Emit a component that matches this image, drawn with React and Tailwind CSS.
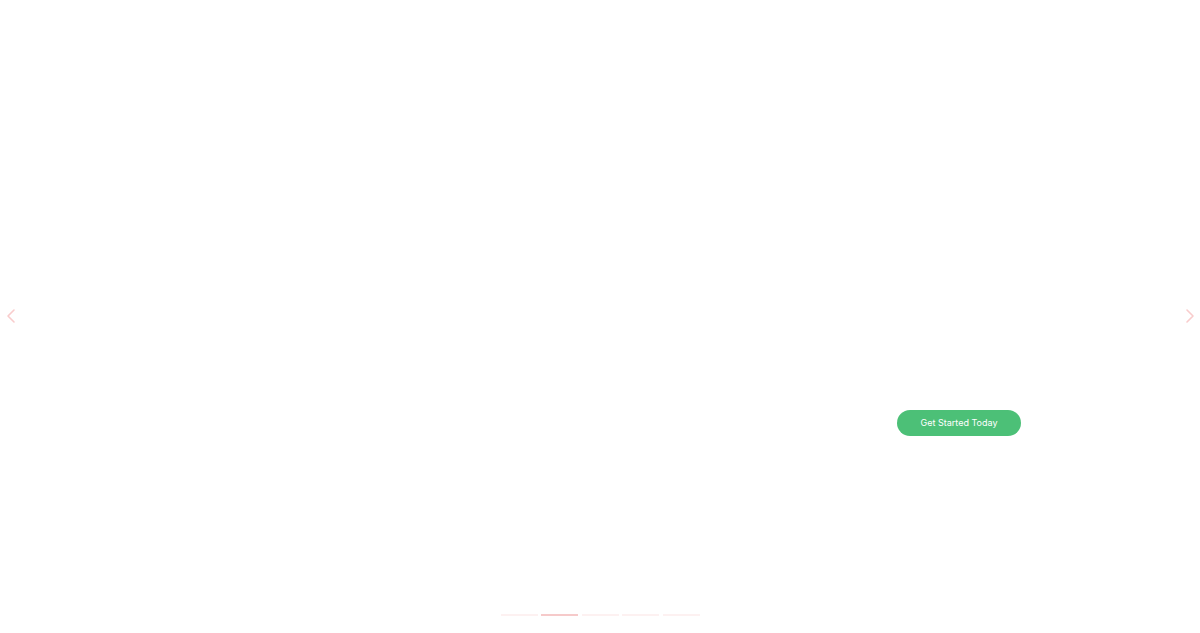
import { ChevronLeft, ChevronRight } from 'lucide-react';

export default function App() {
  const slides = [0, 1, 2, 3, 4];
  const active = 1;

  return (
    <div className="relative h-[633px] w-full overflow-hidden bg-white" style={{ fontFamily: 'Inter, "Noto Sans", sans-serif' }}>
      {/* Slide content */}
      <div className="flex h-full w-full flex-col pl-[897px] pt-[410px]">
        <button className="flex h-[26px] w-[124px] items-center justify-center rounded-full bg-[#4cc077] text-[9px] text-white">
          Get Started Today
        </button>
      </div>

      {/* Arrows */}
      <button className="absolute left-[-1px] top-[304px] text-[#f9cccc]">
        <ChevronLeft size={24} strokeWidth={1.6} />
      </button>
      <button className="absolute right-[-2px] top-[304px] text-[#f9cccc]">
        <ChevronRight size={24} strokeWidth={1.6} />
      </button>

      {/* Pagination */}
      <div className="absolute bottom-[17px] left-0 right-0 flex justify-center gap-[3.5px]">
        {slides.map((i) => (
          <span
            key={i}
            className={i === active ? 'h-[2px] w-[37px] bg-[#f6caca]' : 'h-[2px] w-[37px] bg-[#fdf1f1]'}
          />
        ))}
      </div>
    </div>
  );
}
